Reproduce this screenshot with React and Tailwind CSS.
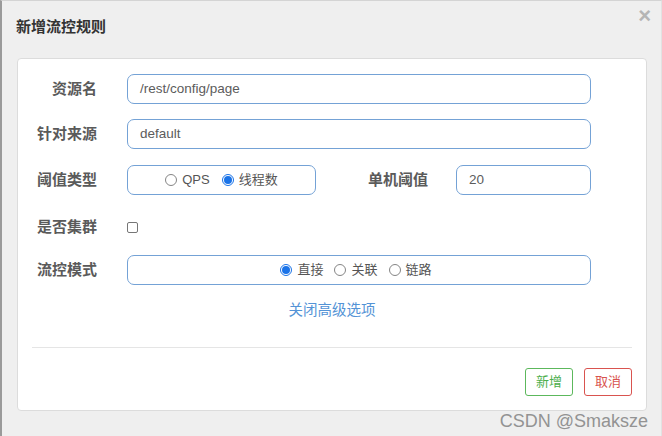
import React from "react";

const font = { fontFamily: '"Liberation Sans", "Noto Sans CJK SC", sans-serif' };

function Radio({ checked }) {
  return checked ? (
    <span className="inline-flex w-[12px] h-[12px] rounded-full border border-[#1a73e8] bg-white items-center justify-center">
      <span className="w-[8px] h-[8px] rounded-full bg-[#1a73e8]" />
    </span>
  ) : (
    <span className="inline-block w-[12px] h-[12px] rounded-full border border-[#858585] bg-white" />
  );
}

function RadioItem({ checked, label }) {
  return (
    <span className="inline-flex items-center gap-[5px]">
      <Radio checked={checked} />
      <span>{label}</span>
    </span>
  );
}

function Label({ children, w = "w-[79px]" }) {
  return (
    <div className={`${w} text-right text-[15px] font-bold text-[#5a5a5a] shrink-0`}>{children}</div>
  );
}

const box = "h-[30px] rounded-[7px] border border-[#74a2d6] bg-white";

export default function App() {
  return (
    <div
      style={font}
      className="relative w-[662px] h-[436px] bg-[#efefef] border-l-2 border-l-[#9a9a9a] border-t border-t-[#d4d4d4] border-r border-r-[#e2e2e2] overflow-hidden"
    >
      <div className="flex justify-between items-start h-[57px] pl-[14px] pr-[10px]">
        <div className="pt-[15px] text-[15px] font-bold text-[#333]">新增流控规则</div>
        <div className="pt-[4px] text-[22px] leading-[22px] font-bold text-[#b5b5b5]">×</div>
      </div>
      <div className="ml-[15px] w-[630px] h-[353px] bg-white border border-[#dcdcdc] rounded-[4px] pt-[15px]">
        <div className="flex items-center h-[30px]">
          <Label>资源名</Label>
          <div className={`${box} ml-[30px] w-[464px] flex items-center pl-[12px] text-[13.5px] text-[#5c5c5c]`}>
            /rest/config/page
          </div>
        </div>
        <div className="flex items-center h-[30px] mt-[15px]">
          <Label>针对来源</Label>
          <div className={`${box} ml-[30px] w-[464px] flex items-center pl-[12px] text-[13.5px] text-[#5c5c5c]`}>
            default
          </div>
        </div>
        <div className="flex items-center h-[30px] mt-[16px]">
          <Label>阈值类型</Label>
          <div className={`${box} ml-[30px] w-[189px] flex items-center justify-center gap-[12px] text-[13px] text-[#555]`}>
            <RadioItem label="QPS" />
            <RadioItem checked label="线程数" />
          </div>
          <div className="ml-[50px] w-[62px] text-right text-[15px] font-bold text-[#5a5a5a]">单机阈值</div>
          <div className={`${box} ml-[28px] w-[135px] flex items-center pl-[12px] text-[13.5px] text-[#5c5c5c]`}>
            20
          </div>
        </div>
        <div className="flex items-center h-[30px] mt-[17px]">
          <Label>是否集群</Label>
          <div className="ml-[30px] w-[11px] h-[11px] rounded-[2px] border border-[#767676] bg-white" />
        </div>
        <div className="flex items-center h-[30px] mt-[13px]">
          <Label>流控模式</Label>
          <div className={`${box} ml-[30px] w-[464px] flex items-center justify-center gap-[11px] text-[13px] text-[#555] pr-[6px]`}>
            <RadioItem checked label="直接" />
            <RadioItem label="关联" />
            <RadioItem label="链路" />
          </div>
        </div>
        <div className="mt-[16px] h-[20px] flex items-center justify-center text-[14.5px] text-[#5393d6]">
          关闭高级选项
        </div>
        <div className="mx-[14px] mt-[26px] border-t border-[#e5e5e5]" />
        <div className="mx-[14px] mt-[20px] flex justify-end gap-[11px]">
          <div className="w-[48px] h-[28px] rounded-[3px] border border-[#5cb85c] text-[#4cae4c] text-[13px] flex items-center justify-center">
            新增
          </div>
          <div className="w-[48px] h-[28px] rounded-[3px] border border-[#d9534f] text-[#d9534f] text-[13px] flex items-center justify-center">
            取消
          </div>
        </div>
      </div>
      <div className="absolute right-[13px] bottom-[5px] text-[18px] leading-[20px] text-[#939393]">
        CSDN @Smaksze
      </div>
    </div>
  );
}
